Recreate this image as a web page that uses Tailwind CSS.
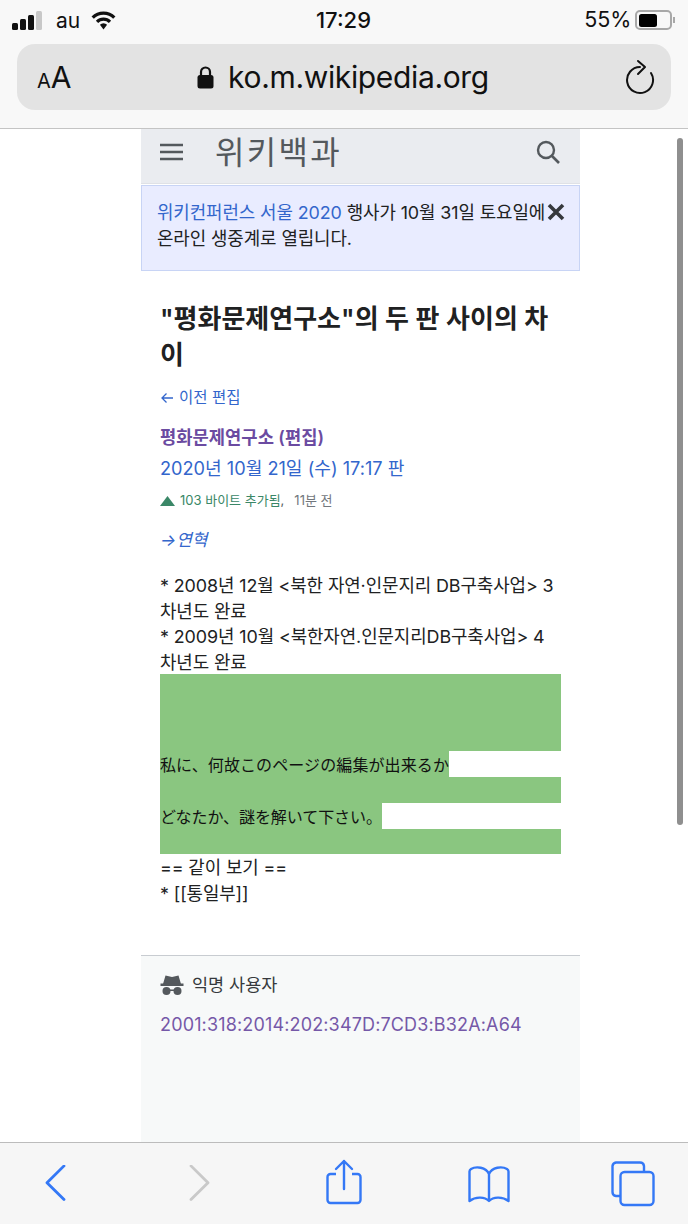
<!doctype html>
<html lang="ko">
<head>
<meta charset="utf-8">
<script src="https://cdn.jsdelivr.net/npm/@tailwindcss/browser@4"></script>
<title>위키백과</title>
</head>
<body class="bg-white font-['Inter','Noto_Sans_CJK_KR',sans-serif] text-[#202122]">
<div class="relative w-[688px] h-[1224px] overflow-hidden flex flex-col">
  <!-- Safari top -->
  <div class="h-[129px] shrink-0 bg-[#f8f8f8] border-b border-[#c4c4c4] flex flex-col">
    <div class="h-[40px] shrink-0 mb-[4px] flex items-center justify-between pl-[12px] pr-[13px] text-[#111]">
      <div class="flex items-center w-[150px]">
        <svg width="30" height="19" viewBox="0 0 30 19"><rect x="0" y="12" width="6" height="7" rx="1.500" fill="#111"/><rect x="8" y="8" width="6" height="11" rx="1.500" fill="#111"/><rect x="16" y="4" width="6" height="15" rx="1.500" fill="#111"/><rect x="24" y="0" width="6" height="19" rx="1.500" fill="#c8c8c8"/></svg>
        <span class="ml-[14px] text-[21px] leading-none">au</span>
        <svg class="ml-[10px]" width="27" height="20" viewBox="0.500 0.500 23 18.500"><path d="M2 7.500 A14 14 0 0 1 22 7.500" fill="none" stroke="#111" stroke-width="3"/><path d="M6 11.500 A8.500 8.500 0 0 1 18 11.500" fill="none" stroke="#111" stroke-width="3"/><path d="M8.700 14.200 A4.600 4.600 0 0 1 15.300 14.200 L12 18.600 Z" fill="#111"/></svg>
      </div>
      <div class="text-[22px] font-medium leading-none">17:29</div>
      <div class="flex items-center w-[150px] justify-end">
        <span class="text-[21.500px] leading-none">55%</span>
        <div class="ml-[4px] w-[37px] h-[20px] rounded-[5px] border-2 border-[#a8a8a8] p-[1.500px]"><div class="w-[18px] h-full rounded-[2.500px] bg-black"></div></div>
        <div class="ml-[1px] w-[1.500px] h-[6px] bg-[#a8a8a8]"></div>
      </div>
    </div>
    <div class="mx-[17px] h-[66px] rounded-[18px] bg-[#e3e3e3] flex items-center justify-between pl-[20px] pr-[16px]">
      <div class="text-[#111] leading-none flex items-baseline w-[60px]"><span class="text-[20px]">A</span><span class="text-[30px]">A</span></div>
      <div class="flex items-center text-[#111] mr-[36px]">
        <svg width="17" height="24" viewBox="0 0 17 24"><path d="M4 11V7a4.500 4.500 0 0 1 9 0v4" fill="none" stroke="#111" stroke-width="2.200"/><rect x="0.500" y="10" width="16" height="13.500" rx="2.500" fill="#111"/></svg>
        <span class="ml-[14px] text-[30px] leading-none tracking-[-0.35px]">ko.m.wikipedia.org</span>
      </div>
      <svg width="30" height="36" viewBox="0 0 30 36"><path d="M15 8 A13 13 0 1 0 26 14" fill="none" stroke="#111" stroke-width="2" stroke-linecap="round"/><path d="M13 2 L20 8 L13 15" fill="none" stroke="#111" stroke-width="2" stroke-linecap="round" stroke-linejoin="round"/></svg>
    </div>
  </div>

  <!-- Page content -->
  <div class="flex-1 min-h-0 w-[439px] ml-[141px] flex flex-col overflow-hidden">
    <header class="h-[55px] shrink-0 bg-[#eaecf0] border-b border-[#dfe1e6] flex items-center pl-[19px] pr-[20px] pb-[9px]">
      <svg width="23" height="18" viewBox="0 0 23 18"><path d="M0 2h23M0 9h23M0 16h23" stroke="#54595d" stroke-width="2.400"/></svg>
      <span class="ml-[32px] mb-[4px] text-[32px] leading-[36px] tracking-[2.300px] text-[#54595d] font-['Noto_Sans_CJK_KR',sans-serif]">위키백과</span>
      <svg class="ml-auto" width="24" height="24" viewBox="0 0 24 24"><circle cx="10" cy="10" r="8" fill="none" stroke="#54595d" stroke-width="2.400"/><path d="M15.500 15.500 L23 23" stroke="#54595d" stroke-width="2.600"/></svg>
    </header>
    <div class="shrink-0 mt-[1px] h-[86px] bg-[#e9ecff] border border-[#c8d4f5] pl-[15px] pr-[13px] pt-[14px] relative">
      <p class="text-[17.900px] leading-[26px] tracking-[-0.1px] w-[392px]"><a class="text-[#3366cc]">위키컨퍼런스 서울 2020</a> 행사가 10월 31일 토요일에 온라인 생중계로 열립니다.</p>
      <svg class="absolute right-[13px] top-[16px]" width="20" height="20" viewBox="0 0 20 20"><path d="M3 3 L17 17 M17 3 L3 17" stroke="#36393d" stroke-width="3.600"/></svg>
    </div>

    <main class="shrink-0 px-[19px] pt-[30px]">
      <h1 class="text-[26px] leading-[36px] font-semibold break-all">"평화문제연구소"의 두 판 사이의 차이</h1>
      <a class="mt-[15px] flex items-center text-[15.500px] leading-[20px] text-[#3366cc]"><svg width="14" height="12" viewBox="0 0 14 12"><path d="M13 6H2M6.500 1.500 2 6l4.500 4.500" fill="none" stroke="#3366cc" stroke-width="1.300"/></svg><span class="ml-[5px]">이전 편집</span></a>
      <div class="mt-[18px] text-[17.700px] leading-[24px] font-semibold text-[#6b4ba1]">평화문제연구소 (편집)</div>
      <div class="mt-[6px] text-[18.150px] leading-[24px] text-[#3366cc]">2020년 10월 21일 (수) 17:17 판</div>
      <div class="mt-[11px] flex items-center h-[20px] text-[13px]">
        <svg width="15" height="10" viewBox="0 0 15 10"><path d="M7.500 0 15 10H0Z" fill="#3a8767"/></svg>
        <span class="ml-[5px] text-[#3a8767]">103 바이트 추가됨</span><span class="text-[#54595d]">,</span>
        <span class="ml-[10px] text-[#72777d]">11분 전</span>
      </div>
      <div class="mt-[17px] text-[17px] leading-[24px] italic text-[#3366cc]">→연혁</div>
      <div class="mt-[21px] text-[17.900px] leading-[25.500px] tracking-[-0.1px] w-[398px] break-all">
        <p>* 2008년 12월 &lt;북한 자연·인문지리 DB구축사업&gt; 3차년도 완료</p>
        <p>* 2009년 10월 &lt;북한자연.인문지리DB구축사업&gt; 4차년도 완료</p>
      </div>
      <div class="w-[401px] mt-[-1px] text-[16px] leading-[26px] text-[#111] font-['Noto_Sans_CJK_JP',sans-serif]">
        <div class="h-[77px] bg-[#8ac680]"></div>
        <div class="h-[26px] flex bg-white"><span class="shrink-0 bg-[#8ac680] whitespace-nowrap tracking-[0.1px]">私に、何故このページの編集が出来るか</span></div>
        <div class="h-[26px] bg-[#8ac680]"></div>
        <div class="h-[26px] flex bg-white"><span class="shrink-0 bg-[#8ac680] whitespace-nowrap tracking-[-0.07px]">どなたか、謎を解いて下さい。</span></div>
        <div class="h-[25px] bg-[#8ac680]"></div>
      </div>
      <div class="mt-[1px] text-[17.850px] leading-[26px] tracking-[-0.1px]">
        <p>== 같이 보기 ==</p>
        <p>* [[통일부]]</p>
      </div>
    </main>

    <footer class="mt-[48px] flex-1 bg-[#f7f9f9] border-t border-[#c8ccd1] pl-[19px] pt-[17px]">
      <div class="flex items-center h-[24px]">
        <svg width="24" height="22" viewBox="0 0 24 22"><path d="M3 10 5.500 1.500 12 3l6.500-1.500L21 10Z" fill="#54595d"/><rect x="0.500" y="9.500" width="23" height="2.500" fill="#54595d"/><circle cx="6.500" cy="17" r="4" fill="#54595d"/><circle cx="17.500" cy="17" r="4" fill="#54595d"/><rect x="9" y="15.500" width="6" height="1.500" fill="#54595d"/></svg>
        <span class="ml-[8px] text-[17.500px] leading-[24px] text-[#36393d]">익명 사용자</span>
      </div>
      <div class="mt-[16px] text-[18px] leading-[24px] tracking-[0.15px] text-[#7558a8]">2001:318:2014:202:347D:7CD3:B32A:A64</div>
    </footer>
  </div>

  <!-- Safari bottom -->
  <div class="h-[82px] shrink-0 bg-[#f6f6f6] border-t border-[#bcbcbc] flex items-start pt-[18px] pl-[44px]">
    <svg class="mt-[4px]" width="24" height="38" viewBox="0 0 24 38"><path d="M20 2 3 19.500 20 37" transform="translate(0 -1) scale(1 .96)" fill="none" stroke="#3478f6" stroke-width="2.800" stroke-linecap="round" stroke-linejoin="round"/></svg>
    <svg class="mt-[4px] ml-[119px]" width="24" height="38" viewBox="0 0 24 38"><path d="M4 2 21 19.500 4 37" transform="translate(0 -1) scale(1 .96)" fill="none" stroke="#c9c9c9" stroke-width="2.800" stroke-linecap="round" stroke-linejoin="round"/></svg>
    <svg class="mt-[-2px] ml-[115px]" width="36" height="46" viewBox="0 0 36 46"><path d="M10 15H4.500A3 3 0 0 0 1.500 18V41A3 3 0 0 0 4.500 44H31.500A3 3 0 0 0 34.500 41V18A3 3 0 0 0 31.500 15H26" fill="none" stroke="#3478f6" stroke-width="2.400"/><path d="M18 30V2M10 10 18 2 26 10" fill="none" stroke="#3478f6" stroke-width="2.400" stroke-linecap="round" stroke-linejoin="round"/></svg>
    <svg class="mt-[4px] ml-[106px]" width="42" height="38" viewBox="0 0 42 38"><path d="M21 9C18 2 8 1 3 4A3 3 0 0 0 1.500 6.500V36C8 31 17 32 21 36 25 32 34 31 40.500 36V6.500A3 3 0 0 0 39 4C34 1 24 2 21 9ZM21 9V36" fill="none" stroke="#3478f6" stroke-width="2.400" stroke-linejoin="round"/></svg>
    <svg class="ml-[101px]" width="44" height="46" viewBox="0 0 44 46"><path d="M9 35H5A4 4 0 0 1 1.500 31V5A4 4 0 0 1 5 1.500H29A4 4 0 0 1 33 5V10" fill="none" stroke="#3478f6" stroke-width="2.400"/><rect x="9.500" y="11" width="33" height="33" rx="4" fill="none" stroke="#3478f6" stroke-width="2.400"/></svg>
  </div>

  <!-- Overlay scrollbar -->
  <div class="absolute left-[677px] top-[138px] w-[6px] h-[687px] rounded-full bg-[#8f8f8f]"></div>
</div>
</body>
</html>
